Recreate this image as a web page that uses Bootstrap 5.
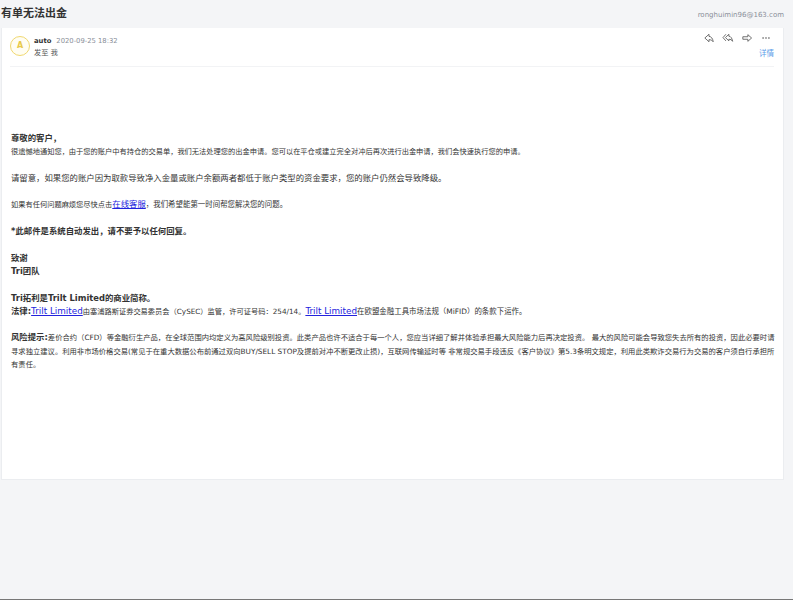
<!DOCTYPE html>
<html lang="zh"><head><meta charset="utf-8"><title>有单无法出金</title>
<link href="https://cdn.jsdelivr.net/npm/bootstrap@5.3.0/dist/css/bootstrap.min.css" rel="stylesheet">
<style>
html,body{height:600px;overflow:hidden}
body{background:#f4f5f7;font-family:"DejaVu Sans","Noto Sans CJK SC",sans-serif;color:#333;position:relative}
.mail-top{height:28px;padding:0 9px 0 1px}
.mail-title{font-size:11px;line-height:28px;font-weight:700;color:#333;margin:0}
.mail-addr{font-size:7px;color:#8a8f99;margin-top:2px}
.mail-card{width:783px;height:452px;margin-left:1px;background:#fff;border:1px solid #ebedf0;border-top:0}
.mail-head{height:39px;margin:0 9px 0 8px;border-bottom:1px solid #f2f3f5;padding-top:8px}
.mail-ava{width:20px;height:20px;border:1px solid #f0d870;border-radius:50%;color:#e8c94a;font-size:8px;font-weight:700;line-height:18px;text-align:center;margin-right:4px;background:#fffdf2}
.mail-from{font-size:6.8px;line-height:11px;font-weight:700;color:#333}
.mail-date{font-size:6.8px;line-height:11px;font-weight:400;color:#8a8f99;margin-left:5px}
.mail-to{font-size:7.2px;line-height:12px;color:#555}
.mail-tools{gap:9px;margin-right:3px;margin-top:-3px}
.mail-tools svg{display:block;width:10px;height:10px}
.mail-more{font-size:7.5px;color:#5b9be8;line-height:11px;margin-top:5px}
.mail-body{padding:65px 7px 0 9px;color:#333}
.mail-body p{margin:0;font-size:7.24px;line-height:13.3px}
.mail-body p.t-b,.mail-body b{font-size:8.4px;font-weight:700}
.mail-body p.t-w,.mail-body a.t-w{font-size:8.4px}
.mail-body .t-l{font-size:8.8px}
.mail-body .t-s{font-size:7.45px}
.mail-body p.t-r{font-size:7.32px}
.mail-body a{color:#2222dd;text-decoration:underline}
.mail-body p.gap1{margin-top:13.3px}
.mail-strip{position:absolute;left:0;right:0;bottom:0;height:1px;background:#777}
</style></head>
<body>
<div class="mail-top d-flex justify-content-between align-items-center">
<h1 class="mail-title">有单无法出金</h1><span class="mail-addr">ronghuimin96@163.com</span>
</div>
<div class="mail-card">
<div class="mail-head d-flex justify-content-between">
<div class="d-flex">
<div class="mail-ava">A</div>
<div><div class="mail-from">auto<span class="mail-date">2020-09-25 18:32</span></div><div class="mail-to">发至 我</div></div>
</div>
<div class="d-flex flex-column align-items-end">
<div class="mail-tools d-flex">
<svg viewBox="0 0 12 12" fill="none" stroke="#555" stroke-width="1"><path d="M6 1.500 1 6l5 4.500V8c2 0 3.600.6 5 2.500C10.600 6.800 9 4.400 6 4z"/></svg>
<svg viewBox="0 0 12 12" fill="none" stroke="#555" stroke-width="1" style="overflow:visible"><path d="M3.500 1.500 0 5.500l3.500 4M7 1.500 3 5.500l4 4V7.500c2 0 3.500.6 4.500 2.500C11 6.500 9.500 4 7 3.800z"/></svg>
<svg viewBox="0 0 12 12" fill="none" stroke="#555" stroke-width="1"><path d="M7 2v2.500H1v3h6V10l4.500-4z"/></svg>
<svg viewBox="0 0 12 12" fill="#555"><circle cx="2.500" cy="6" r="1"/><circle cx="6" cy="6" r="1"/><circle cx="9.500" cy="6" r="1"/></svg>
</div>
<div class="mail-more">详情</div>
</div>
</div>
<div class="mail-body">
<p class="t-b">尊敬的客户，</p>
<p>很遗憾地通知您，由于您的账户中有持仓的交易单，我们无法处理您的出金申请。您可以在平仓或建立完全对冲后再次进行出金申请，我们会快速执行您的申请。</p>
<p class="t-w gap1">请留意，如果您的账户因为取款导致净入金量或账户余额两者都低于账户类型的资金要求，您的账户仍然会导致降级。</p>
<p class="gap1">如果有任何问题麻烦您尽快点击<a class="t-w" href="#">在线客服</a><span class="t-s">，我们希望能第一时间帮您解决您的问题。</span></p>
<p class="t-b gap1">*此邮件是系统自动发出，请不要予以任何回复。</p>
<p class="t-b gap1">致谢</p>
<p class="t-b">Tri团队</p>
<p class="t-b gap1">Tri拓利是Trilt Limited的商业简称。</p>
<p><b>法律:</b><a class="t-l" href="#">Trilt Limited</a>由塞浦路斯证券交易委员会（CySEC）监管，许可证号码：254/14。<a class="t-l" href="#">Trilt Limited</a><span class="t-s">在欧盟金融工具市场法规（MiFID）的条款下运作。</span></p>
<p class="t-r gap1"><b>风险提示:</b>差价合约（CFD）等金融衍生产品，在全球范围内均定义为高风险级别投资。此类产品也许不适合于每一个人，您应当详细了解并体验承担最大风险能力后再决定投资。 最大的风险可能会导致您失去所有的投资，因此必要时请寻求独立建议。利用非市场价格交易(常见于在重大数据公布前通过双向BUY/SELL STOP及提前对冲不断更改止损)，互联网传输延时等 非常规交易手段违反《客户协议》第5.3条明文规定，利用此类欺诈交易行为交易的客户须自行承担所有责任。</p>
</div>
</div>
<div class="mail-strip"></div>
<script src="https://cdn.jsdelivr.net/npm/bootstrap@5.3.0/dist/js/bootstrap.bundle.min.js"></script>
</body></html>
